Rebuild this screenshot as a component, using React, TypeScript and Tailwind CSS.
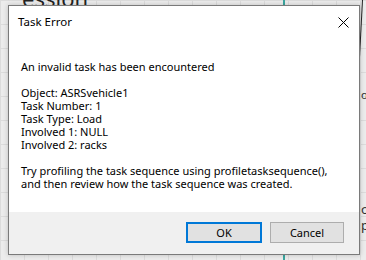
import React from 'react';

const lines = [
  'An invalid task has been encountered',
  '',
  'Object: ASRSvehicle1',
  'Task Number: 1',
  'Task Type: Load',
  'Involved 1: NULL',
  'Involved 2: racks',
  '',
  'Try profiling the task sequence using profiletasksequence(),',
  'and then review how the task sequence was created.',
];

function CloseIcon() {
  return (
    <svg width="11" height="11" viewBox="0 0 11 11" className="block">
      <path d="M0.5 0.5 L10.5 10.5 M10.5 0.5 L0.5 10.5" stroke="#000" strokeWidth="1" fill="none" />
    </svg>
  );
}

export default function App() {
  return (
    <div
      className="relative w-[366px] h-[260px] overflow-hidden bg-[#ececec] bg-[linear-gradient(#dcdcdc_1px,transparent_1px),linear-gradient(90deg,#dcdcdc_1px,transparent_1px)] bg-[size:24px_24px] pt-[5px] pl-[8px]"
      style={{ fontFamily: '"Noto Sans", "Open Sans", sans-serif' }}
    >
      {/* bits of the app behind the dialog */}
      <span className="absolute left-[22px] top-[-14px] text-[22px] leading-[24px] text-[#222]">ession</span>
      <div className="absolute left-[283px] top-0 w-[2px] h-[260px] bg-[#3aa7a0]" />
      <div className="absolute left-[362px] top-0 w-[1px] h-[70px] bg-[#222] rotate-[3deg] origin-top" />
      <span className="absolute left-[361px] top-[88px] text-[11px] leading-[14px] text-[#333]">o</span>
      <span className="absolute left-[361px] top-[202px] text-[13px] leading-[14px] text-[#333]">o</span>
      <span className="absolute left-[361px] top-[218px] text-[13px] leading-[14px] text-[#333]">p</span>

      <div className="relative flex flex-col w-[352px] h-[250px] border border-[#7a7a7a] bg-white shadow-[0_0_5px_rgba(0,0,0,0.2)]">
        <div className="flex items-center justify-between h-[32px] pl-[9px] pr-[10px]">
          <span className="text-[11.5px] leading-[16px] text-black">Task Error</span>
          <CloseIcon />
        </div>
        <div className="flex-1 pl-[12px] pt-[22px] text-[11px] leading-[13px] text-black">
          {lines.map((l, i) => (
            <div key={i} className="h-[13px] whitespace-nowrap">
              {l}
            </div>
          ))}
        </div>
        <div className="flex justify-end gap-[8px] h-[42px] pt-[10px] pr-[15px] bg-[#f0f0f0]">
          <button className="w-[76px] h-[21px] border-2 border-[#0078d7] bg-[#e1e1e1] text-[11px] leading-[14px] text-black">
            OK
          </button>
          <button className="w-[74px] h-[21px] border border-[#adadad] bg-[#e1e1e1] text-[11px] leading-[14px] text-black">
            Cancel
          </button>
        </div>
      </div>
    </div>
  );
}
